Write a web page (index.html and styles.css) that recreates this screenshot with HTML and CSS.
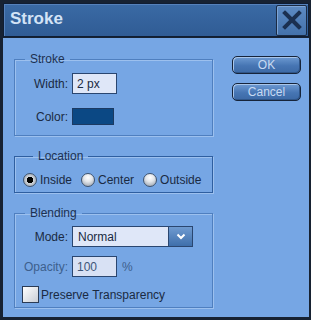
FILE: index.html
```html
<!DOCTYPE html>
<html lang="en">
<head>
    <meta charset="UTF-8">
    <meta name="viewport" content="width=device-width, initial-scale=1.0">
    <title>Stroke</title>
    <link rel="stylesheet" href="styles.css">
</head>
<body>
    <div class="window">
        <div class="titlebar">
            <span class="title">Stroke</span>
            <button class="close" aria-label="Close">
                <svg width="20" height="20" viewBox="0 0 20 20">
                    <path d="M3 3 L17 17 M17 3 L3 17" stroke="#1b3050" stroke-width="4" stroke-linecap="square"/>
                </svg>
            </button>
        </div>

        <div class="content">
            <div class="groups">
                <fieldset class="group stroke">
                    <legend>Stroke</legend>
                    <div class="row">
                        <label class="label">Width:</label>
                        <input class="field" type="text" value="2 px">
                    </div>
                    <div class="row">
                        <label class="label">Color:</label>
                        <span class="swatch"></span>
                    </div>
                </fieldset>

                <fieldset class="group location">
                    <legend>Location</legend>
                    <div class="radios">
                        <span class="radio checked"></span><span class="radio-label">Inside</span>
                        <span class="radio"></span><span class="radio-label">Center</span>
                        <span class="radio"></span><span class="radio-label">Outside</span>
                    </div>
                </fieldset>

                <fieldset class="group blending">
                    <legend>Blending</legend>
                    <div class="row">
                        <label class="label">Mode:</label>
                        <div class="select">
                            <span class="select-value">Normal</span>
                            <span class="select-btn">
                                <svg width="10" height="7" viewBox="0 0 10 7">
                                    <path d="M1.5 1.5 L5 5 L8.5 1.5" fill="none" stroke="#ffffff" stroke-width="2"/>
                                </svg>
                            </span>
                        </div>
                    </div>
                    <div class="row">
                        <label class="label disabled">Opacity:</label>
                        <input class="field dim" type="text" value="100">
                        <span class="unit">%</span>
                    </div>
                    <div class="check-row">
                        <span class="checkbox"></span>
                        <span class="check-label">Preserve Transparency</span>
                    </div>
                </fieldset>
            </div>

            <div class="actions">
                <button class="btn">OK</button>
                <button class="btn">Cancel</button>
            </div>
        </div>
    </div>
</body>
</html>
```

FILE: styles.css
```css
body {
    margin: 0;
    font-family: "Liberation Sans", Arial, sans-serif;
    font-size: 12px;
    color: #1a2a42;
}

.window {
    width: 311px;
    height: 320px;
    box-sizing: border-box;
    background: #172232;
    padding: 3px 2px 3px 3px;
    display: flex;
    flex-direction: column;
}

.titlebar {
    height: 34px;
    box-sizing: border-box;
    background: linear-gradient(#3a6aa5, #305c95);
    border: 1px solid #0f1d33;
    box-shadow: inset 1px 1px 0 #5581bb;
    display: flex;
    align-items: center;
    justify-content: space-between;
    padding: 0 1px 0 6px;
}

.title {
    font-size: 17px;
    font-weight: bold;
    color: #d3e3f6;
    padding-bottom: 2px;
}

.close {
    width: 31px;
    height: 31px;
    padding: 0;
    border: 1px solid #1a2b44;
    border-radius: 2px;
    background: linear-gradient(#5d8bc3, #4472ab);
    box-shadow: inset 1px 1px 0 #7ea5d6;
    display: flex;
    align-items: center;
    justify-content: center;
}

.content {
    flex: 1;
    margin-top: 1px;
    background: #76a6e4;
    display: flex;
    padding: 14px 0 0 11px;
}

.groups {
    width: 199px;
    display: flex;
    flex-direction: column;
}

.group {
    margin: 0;
    min-width: 0;
    padding: 7px 0 8px 0;
    border: 1px solid #4f7fbf;
    box-shadow: inset 1px 1px 0 #9cc0ee, 1px 1px 0 #9cc0ee;
}

.group + .group {
    margin-top: 13px;
}

.group legend {
    margin-left: 10px;
    padding: 0 5px;
    line-height: 14px;
    color: #1d3150;
}

.location {
    padding: 10px 0 5px 8px;
    border-color: #2f5fa0;
}

.blending {
    padding: 6px 0 4px 0;
}

.row {
    display: flex;
    align-items: center;
    height: 21px;
}

.row + .row {
    margin-top: 12px;
}

.blending .row + .row {
    margin-top: 9px;
}

.label {
    width: 53px;
    margin-right: 4px;
    text-align: right;
}

.label.disabled {
    color: #3d5f8d;
}

.field {
    width: 45px;
    height: 21px;
    box-sizing: border-box;
    border: 1px solid #2a4670;
    background: #dfe7f8;
    padding: 0 4px;
    font-family: inherit;
    font-size: 12px;
    color: #1a2a42;
    outline: none;
}

.field.dim {
    color: #3e5678;
    background: #d8e1f4;
}

.unit {
    margin-left: 5px;
    color: #3d5f8d;
}

.swatch {
    width: 42px;
    height: 17px;
    box-sizing: border-box;
    background: #0b4884;
    border: 1px solid #1c3a62;
}

.radios {
    display: flex;
    align-items: center;
    height: 14px;
    white-space: nowrap;
}

.radio {
    flex: none;
    width: 14px;
    height: 14px;
    box-sizing: border-box;
    border-radius: 50%;
    border: 1px solid #3f5470;
    background: radial-gradient(circle at 50% 30%, #ffffff 0, #e3e6ea 40%, #8c96a3 100%);
    margin-right: 3px;
}

.radio.checked {
    background: radial-gradient(circle, #000 0, #000 3px, #cfd4da 3.5px, #8a94a0 100%);
}

.radio-label {
    margin-right: 9px;
}

.check-row {
    display: flex;
    align-items: center;
    margin-top: 9px;
    padding-left: 7px;
}

.checkbox {
    width: 17px;
    height: 17px;
    box-sizing: border-box;
    border: 1px solid #2a3b55;
    background: linear-gradient(135deg, #ffffff, #c9ced6);
    margin-right: 2px;
}

.select {
    width: 121px;
    height: 21px;
    box-sizing: border-box;
    border: 1px solid #2a4670;
    background: #dfe7f8;
    display: flex;
    align-items: center;
    justify-content: space-between;
}

.select-value {
    padding-left: 5px;
}

.select-btn {
    width: 24px;
    height: 19px;
    box-sizing: border-box;
    border-left: 1px solid #2a4670;
    background: linear-gradient(#6f9bd1, #3f6fab);
    display: flex;
    align-items: center;
    justify-content: center;
}

.actions {
    display: flex;
    flex-direction: column;
    margin-left: 19px;
    padding-top: 4px;
    gap: 9px;
}

.btn {
    width: 69px;
    height: 18px;
    padding: 0;
    border: 1px solid #16243a;
    border-radius: 5px;
    background: linear-gradient(#6d9ad2, #4675b3 55%, #3c69a5);
    box-shadow: inset 1px 1px 0 #a9c6ea, inset -1px -1px 0 #2f5588;
    font-family: inherit;
    font-size: 12px;
    color: #c8daf2;
    cursor: pointer;
}

.btn:hover {
    background: linear-gradient(#7aa5da, #4f7dba);
}
```
